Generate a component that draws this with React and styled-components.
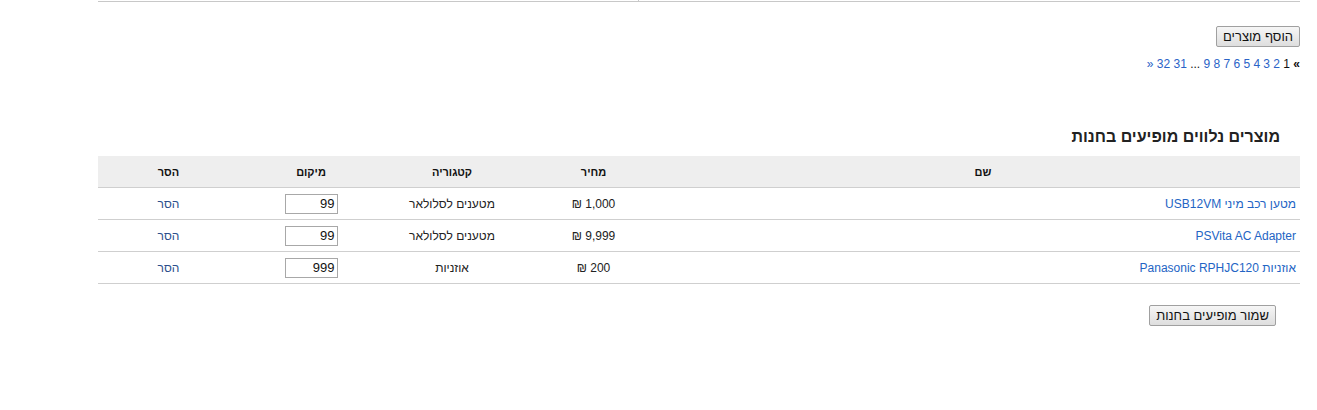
import React from "react";
import styled, { createGlobalStyle } from "styled-components";

const Global = createGlobalStyle`
  html, body { margin: 0; padding: 0; background: #fff; }
  body { font-family: "Liberation Sans", Arial, sans-serif; font-size: 12px; color: #222; }
`;

const Page = styled.div`
  direction: rtl;
  padding: 0 17px 0 98px;
`;

const PrevEdge = styled.div`
  display: flex;
  height: 1px;
  border-bottom: 1px solid #c8c8c8;
`;

const EdgeCell = styled.div`
  width: ${(p) => p.$w}px;
  border-left: ${(p) => (p.$divider ? "1px solid #c8c8c8" : "none")};
`;

const TopActions = styled.div`
  display: flex;
  flex-direction: column;
  align-items: flex-start;
  padding-top: 24px;
`;

const Button = styled.button`
  font-family: "Liberation Sans", Arial, sans-serif;
  font-size: 13px;
  color: #111;
  height: 21px;
  padding: 0 6px;
  border: 1px solid #a0a0a0;
  border-radius: 2px;
  background: linear-gradient(#f6f6f6, #dedede);
  cursor: pointer;
  margin-left: ${(p) => p.$inset || 0}px;
`;

const Pager = styled.div`
  display: flex;
  gap: 3.3px;
  margin-top: 10px;
  font-size: 12px;
  line-height: 14px;
`;

const PageLink = styled.a`
  color: ${(p) => (p.$current ? "#111" : "#2a63c7")};
  text-decoration: none;
  font-weight: ${(p) => (p.$strong ? "bold" : "normal")};
  direction: ltr;
  unicode-bidi: isolate;
`;

const Heading = styled.h2`
  margin: 57px 20px 10px 0;
  font-size: 16px;
  line-height: 18px;
  font-weight: bold;
  color: #222;
`;

const Table = styled.table`
  width: 100%;
  border-collapse: collapse;
  table-layout: fixed;
`;

const Th = styled.th`
  background: #eeeeee;
  height: 31px;
  font-size: 11px;
  font-weight: bold;
  color: #111;
  text-align: center;
  border-bottom: 1px solid #cfcfcf;
  padding: 0 4px;
`;

const Td = styled.td`
  height: 31px;
  padding: 0 4px;
  font-size: 12px;
  color: #222;
  text-align: ${(p) => p.$align || "center"};
  border-bottom: 1px solid #cfcfcf;
  vertical-align: middle;
`;

const NameLink = styled.a`
  color: #2364c4;
  text-decoration: none;
`;

const RemoveLink = styled.a`
  color: #2c4f8c;
  text-decoration: none;
`;

const PosInput = styled.input`
  width: 53px;
  height: 20px;
  box-sizing: border-box;
  border: 1px solid #a8a8a8;
  font-family: "Liberation Sans", Arial, sans-serif;
  font-size: 13px;
  text-align: right;
  direction: rtl;
  padding: 0 2px;
  color: #111;
`;

const BottomActions = styled.div`
  display: flex;
  padding-top: 21px;
`;

const rows = [
  { name: "מטען רכב מיני USB12VM", price: "1,000 ₪", cat: "מטענים לסלולאר", pos: "99" },
  { name: "PSVita AC Adapter", price: "9,999 ₪", cat: "מטענים לסלולאר", pos: "99" },
  { name: "אוזניות Panasonic RPHJC120", price: "200 ₪", cat: "אוזניות", pos: "999" },
];

const pages = ["2", "3", "4", "5", "6", "7", "8", "9"];

export default function App() {
  return (
    <>
      <Global />
      <Page>
        <PrevEdge>
          <EdgeCell $w={662} $divider />
          <EdgeCell $w={540} />
        </PrevEdge>
        <TopActions>
          <Button>הוסף מוצרים</Button>
          <Pager>
            <PageLink $current $strong>«</PageLink>
            <PageLink $current>1</PageLink>
            {pages.map((p) => (
              <PageLink key={p} href="#">{p}</PageLink>
            ))}
            <PageLink $current>...</PageLink>
            <PageLink href="#">31</PageLink>
            <PageLink href="#">32</PageLink>
            <PageLink href="#">»</PageLink>
          </Pager>
        </TopActions>
        <Heading>מוצרים נלווים מופיעים בחנות</Heading>
        <Table>
          <colgroup>
            <col style={{ width: 634 }} />
            <col style={{ width: 145 }} />
            <col style={{ width: 138 }} />
            <col style={{ width: 144 }} />
            <col style={{ width: 141 }} />
          </colgroup>
          <thead>
            <tr>
              <Th>שם</Th>
              <Th>מחיר</Th>
              <Th>קטגוריה</Th>
              <Th>מיקום</Th>
              <Th>הסר</Th>
            </tr>
          </thead>
          <tbody>
            {rows.map((r) => (
              <tr key={r.name}>
                <Td $align="right">
                  <NameLink href="#">{r.name}</NameLink>
                </Td>
                <Td>{r.price}</Td>
                <Td>{r.cat}</Td>
                <Td>
                  <PosInput defaultValue={r.pos} />
                </Td>
                <Td>
                  <RemoveLink href="#">הסר</RemoveLink>
                </Td>
              </tr>
            ))}
          </tbody>
        </Table>
        <BottomActions>
          <Button $inset={0} style={{ marginRight: 24 }}>שמור מופיעים בחנות</Button>
        </BottomActions>
      </Page>
    </>
  );
}
